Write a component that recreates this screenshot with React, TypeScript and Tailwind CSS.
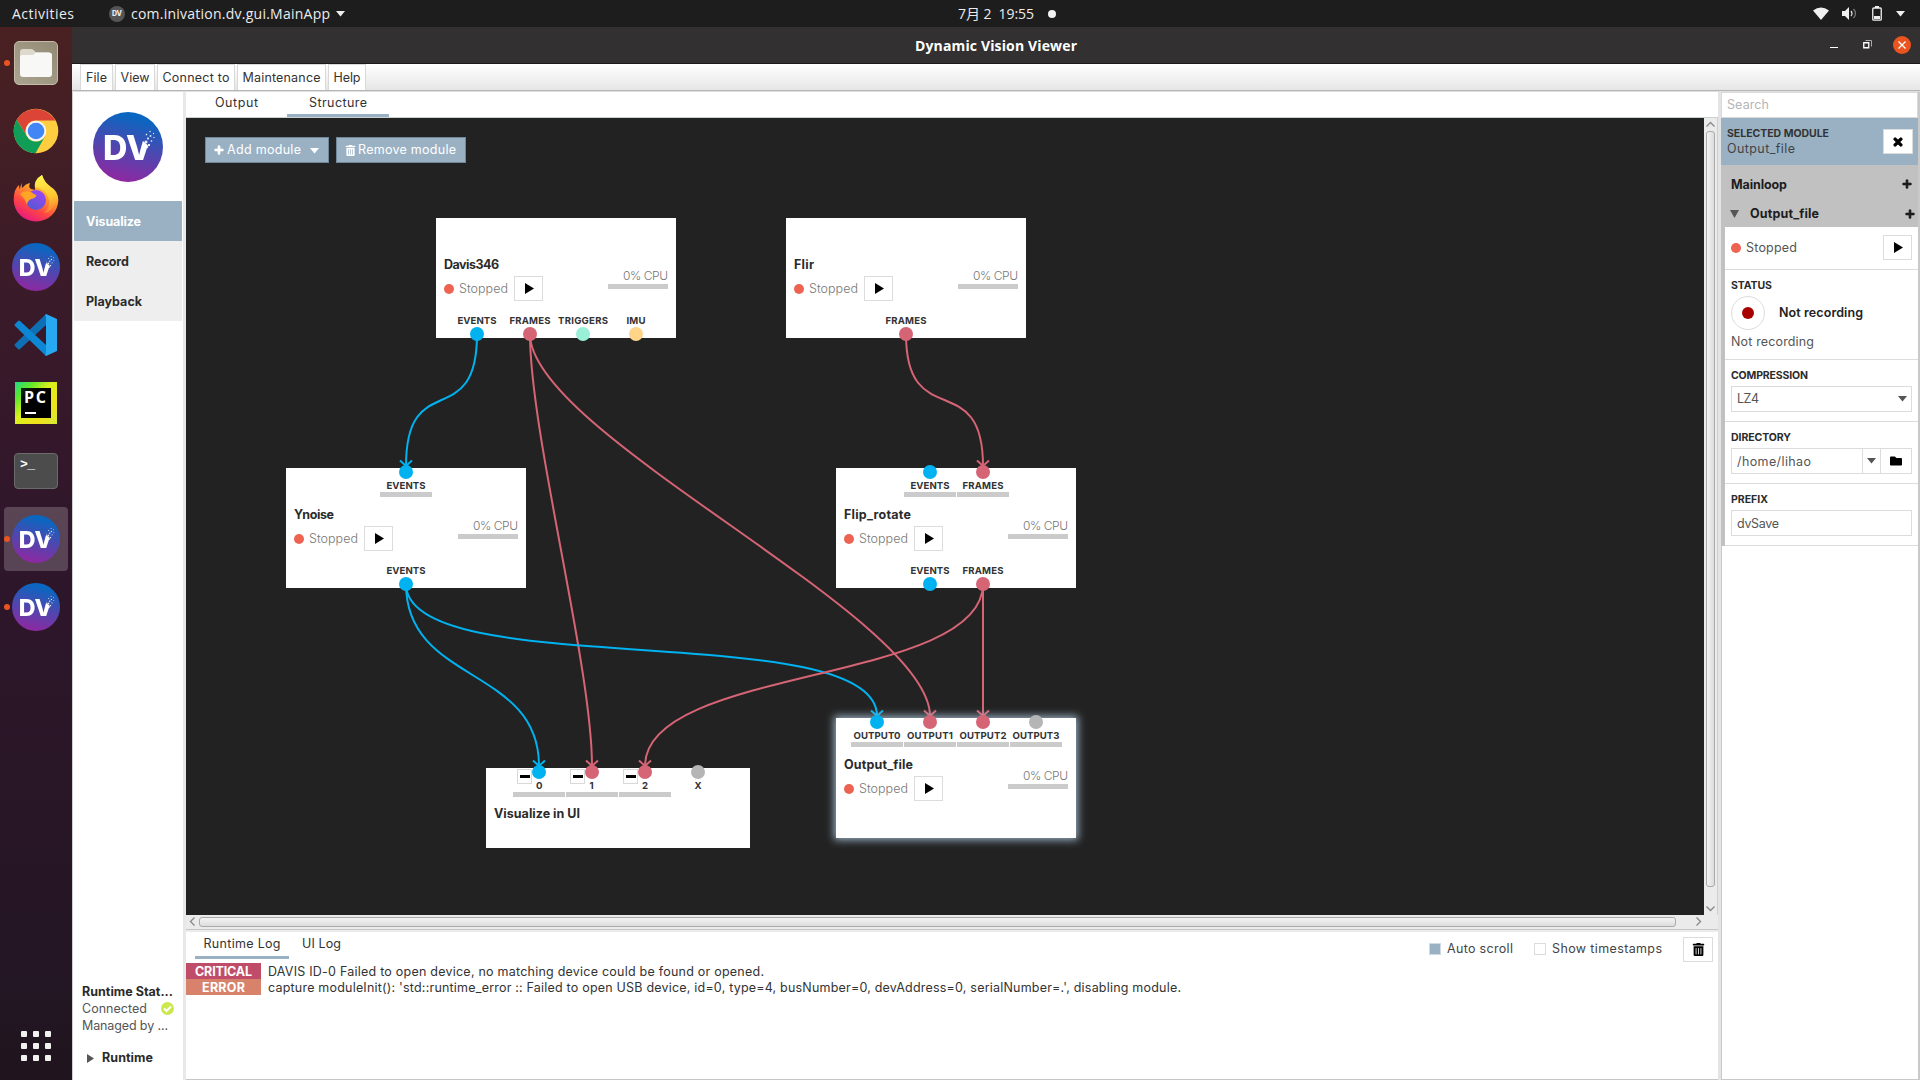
import { useLayoutEffect, useRef } from "react";
import type { ReactNode } from "react";
import { FaPlus, FaTimes, FaFolder, FaTrashAlt } from "react-icons/fa";

/* Single-line label whose tracking is adjusted to span a given width. */
function T({ w, children, className = "" }: { w: number; children: string; className?: string }) {
  const ref = useRef<HTMLSpanElement>(null);
  useLayoutEffect(() => {
    const el = ref.current;
    if (!el) return;
    el.style.letterSpacing = "0px";
    const range = document.createRange();
    range.selectNodeContents(el);
    const natural = range.getBoundingClientRect().width;
    el.style.letterSpacing = `${(w - natural) / Math.max(1, children.length - 1)}px`;
  }, [w, children]);
  return (
    <span ref={ref} className={`inline-block shrink-0 whitespace-pre ${className}`} style={{ width: w }}>
      {children}
    </span>
  );
}

function DVLogo({ size, id }: { size: number; id: string }) {
  const dots = [
    [53, 30, 2.6], [56, 33, 2], [50.5, 33.5, 2.2], [55, 26.5, 1.8], [58.5, 29, 1.4], [53.5, 22.5, 1.4],
    [57.5, 24, 1.6], [61, 25.5, 1.1], [57, 19.5, 1.2], [60.5, 21.5, 1.1], [54, 35, 2.2],
  ];
  return (
    <svg width={size} height={size} viewBox="0 0 70 70" className="block shrink-0">
      <defs>
        <linearGradient id={id} x1="0.6" y1="0" x2="0.35" y2="1">
          <stop offset="0.08" stopColor="#0a66c0" />
          <stop offset="0.5" stopColor="#4c48b0" />
          <stop offset="1" stopColor="#9226a0" />
        </linearGradient>
        <mask id={id + "m"}>
          <rect width="70" height="70" fill="#fff" />
          <path d="M50 29 L58 36 V18 H50 Z" fill="#000" />
        </mask>
      </defs>
      <circle cx="35" cy="35" r="35" fill={`url(#${id})`} />
      <text x="10" y="48.3" textLength="49" lengthAdjust="spacingAndGlyphs" fill="#fff" mask={`url(#${id}m)`}
        className="font-['Inter'] text-[34px] font-extrabold">DV</text>
      {dots.map(([x, y, s], i) => (
        <rect key={i} x={x - s / 2} y={y - s / 2} width={s} height={s} fill="#fff" opacity="0.9" />
      ))}
    </svg>
  );
}

function DockItem({ children, dot, active }: { children: ReactNode; dot?: boolean; active?: boolean }) {
  return (
    <div className="relative flex h-[68px] w-[72px] items-center justify-center">
      {active && <div className="absolute inset-x-1 inset-y-0.5 rounded bg-white/20" />}
      <div className="relative">{children}</div>
      {dot && <div className="absolute left-1 top-[31px] size-1.5 rounded-full bg-[#e95420]" />}
    </div>
  );
}

function FilesIcon() {
  return (
    <div className="flex h-[44px] w-[44px] items-center justify-center rounded-[5px] border border-[#c3bca8] bg-gradient-to-tr from-[#a9a390] to-[#938b74]">
      <svg width="34" height="30" viewBox="0 0 34 30">
        <path d="M1 4Q1 1 4 1H12Q14 1 15 2.5L17 4.5H30V12H1Z" fill="#ddd9cc" />
        <path d="M1 9Q1 7 3 7H14L17 4.500H30Q33 4.500 33 7V26Q33 29 30 29H4Q1 29 1 26Z" fill="#f8f8f7" />
      </svg>
    </div>
  );
}

function ChromeIcon() {
  return (
    <svg width="46" height="46" viewBox="-23 -23 46 46" className="block">
      <circle r="22.300" fill="#ffcd40" />
      <path d="M-19.300 -11.150A22.300 22.300 0 0 1 19.300 -10.500L0 -10.500A10.500 10.500 0 0 0 -9.100 5.250Z" fill="#db4437" />
      <path d="M-19.300 -11.150A22.300 22.300 0 0 0 -0.500 22.300L9.100 5.250A10.500 10.500 0 0 1 -9.100 5.250Z" fill="#0f9d58" />
      <circle r="10.300" fill="#f4f4f4" />
      <circle r="8.300" fill="#4285f4" />
    </svg>
  );
}

function FirefoxIcon() {
  return (
    <svg width="46" height="48" viewBox="0 0 46 48" className="-mt-0.5 block">
      <defs>
        <linearGradient id="ffa" x1="0.8" y1="0" x2="0.25" y2="1">
          <stop offset="0.1" stopColor="#fff44f" />
          <stop offset="0.4" stopColor="#ff9a2a" />
          <stop offset="0.7" stopColor="#ff4545" />
          <stop offset="1" stopColor="#e31587" />
        </linearGradient>
        <linearGradient id="ffb" x1="0.8" y1="0" x2="0.2" y2="1">
          <stop offset="0" stopColor="#a345f5" />
          <stop offset="1" stopColor="#4f5ad0" />
        </linearGradient>
        <linearGradient id="ffc" x1="0.5" y1="0" x2="0.6" y2="1">
          <stop offset="0" stopColor="#fff44f" />
          <stop offset="0.6" stopColor="#ffc22d" />
          <stop offset="1" stopColor="#ff7a38" />
        </linearGradient>
      </defs>
      <path d="M9 9Q8 12 9.500 14Q12 10 17 9Q15 13 18 15L22 16Q20 6 29 1Q31 8 38 13Q45 17 45.300 26A22.300 21.500 0 0 1 .7 26Q.7 15 6 11Q6 14 7 15Q7 12 9 9Z" fill="url(#ffa)" />
      <circle cx="23" cy="26" r="10" fill="url(#ffb)" />
      <path d="M22 13Q21 6 29 1Q31 8 37 13Q45 18 43 27Q39 39 31 39Q39 31 35 23Q32 15 22 13Z" fill="url(#ffc)" />
      <path d="M7 20Q11 16 18 18Q22 21 23.500 21Q23 24 18 25Q14 27 14 31Q13 26 7 20Z" fill="#ffa526" />
    </svg>
  );
}

function CodeIcon() {
  return (
    <svg width="44" height="44" viewBox="0 0 44 44" className="block">
      <path d="M32 1V12L6 36Q5 37 4 36L1 33Q0 32 1 31Z" fill="#0f6fb5" />
      <path d="M32 43V32L6 8Q5 7 4 8L1 11Q0 12 1 13Z" fill="#0d86d3" />
      <path d="M32 1L43 6V38L32 43Q31 43 32 39V5Q31 1 32 1Z" fill="#27a9f1" />
    </svg>
  );
}

function PyCharmIcon() {
  return (
    <div className="flex size-[42px] items-center justify-center bg-[linear-gradient(135deg,#21d789_0%,#5fe82a_22%,#d9f01d_45%,#f0e31b_75%,#d6e83a_100%)]">
      <div className="flex size-[30px] flex-col bg-gradient-to-br from-[#0c2a10] via-black to-black pl-[3px] pt-[1px]">
        <T w={22} className="font-['Open_Sans'] text-[16px] font-bold leading-[17px] text-white">PC</T>
        <div className="ml-px mt-[6px] h-[2px] w-[11px] bg-white" />
      </div>
    </div>
  );
}

function TerminalIcon() {
  return (
    <div className="h-[36px] w-[44px] rounded-[4px] border border-[#6b6b6b] bg-[#4c4c4c] pl-[5px] pt-px">
      <T w={15} className="font-['Liberation_Mono'] text-[13px] font-bold leading-[14px] text-white">{">_"}</T>
    </div>
  );
}

const Play = () => (
  <svg width="9" height="11" viewBox="0 0 9 11" className="ml-px block"><path d="M0 0L9 5.500L0 11Z" fill="#000" /></svg>
);
const Down = ({ fill = "#555" }: { fill?: string }) => (
  <svg width="9" height="6" viewBox="0 0 9 6" className="block"><path d="M0 0H9L4.500 5.500Z" fill={fill} /></svg>
);
const PlayButton = () => (
  <div className="flex h-[25px] w-[29px] items-center justify-center border border-[#dcdcdc] bg-white"><Play /></div>
);
const Plus = ({ className = "" }: { className?: string }) => (
  <FaPlus size={10} stroke="currentColor" strokeWidth={36} className={className} />
);

function TopBar() {
  return (
    <header className="relative flex h-[27px] items-center bg-[#1d1d1d] font-['Open_Sans','Noto_Sans_CJK_JP',sans-serif] text-[14px] leading-[26px] text-[#ececec]">
      <T w={62} className="ml-3">Activities</T>
      <div className="ml-[35px] flex size-4 items-center justify-center rounded-full bg-[#555]">
        <T w={10} className="font-['Inter'] text-[7px] font-extrabold leading-4">DV</T>
      </div>
      <T w={199} className="ml-[6px]">com.inivation.dv.gui.MainApp</T>
      <div className="ml-[6px]"><Down fill="#ececec" /></div>
      <div className="absolute left-[958px] flex items-center pt-px">
        <T w={76}>7月 2  19:55</T>
        <div className="mb-px ml-[14px] size-2 rounded-full bg-[#f2f2f2]" />
      </div>
      <div className="ml-auto mr-[15px] flex items-center">
        <svg width="16" height="13" viewBox="0 0 16 13"><path d="M0 3.500Q8 -2.500 16 3.500L8 13Z" fill="#f0f0f0" /></svg>
        <svg width="15" height="13" viewBox="0 0 15 13" className="ml-[13px]">
          <path d="M0 4H3L7 0V13L3 9H0Z" fill="#f0f0f0" />
          <path d="M9 4Q11 6.500 9 9" stroke="#ddd" fill="none" strokeWidth="1.300" />
          <path d="M11.500 2Q15.500 6.500 11.500 11" stroke="#777" fill="none" strokeWidth="1.300" />
        </svg>
        <svg width="10" height="15" viewBox="0 0 10 15" className="ml-[15px]">
          <rect x="0.750" y="2" width="8.500" height="12.200" rx="1" fill="none" stroke="#f0f0f0" strokeWidth="1.300" />
          <path d="M3 0H7V2H3ZM2 10H8V13H2Z" fill="#f0f0f0" />
        </svg>
        <div className="ml-[14px]"><Down fill="#f0f0f0" /></div>
      </div>
    </header>
  );
}

function Dock() {
  return (
    <aside className="flex w-[72px] shrink-0 flex-col bg-[linear-gradient(#4a2122_0%,#391a29_27%,#2f162b_50%,#231623_93%,#1f141d_100%)] pt-0.5">
      <DockItem dot><FilesIcon /></DockItem>
      <DockItem><ChromeIcon /></DockItem>
      <DockItem><FirefoxIcon /></DockItem>
      <DockItem><DVLogo size={48} id="dv1" /></DockItem>
      <DockItem><CodeIcon /></DockItem>
      <DockItem><PyCharmIcon /></DockItem>
      <DockItem><TerminalIcon /></DockItem>
      <DockItem dot active><DVLogo size={48} id="dv2" /></DockItem>
      <DockItem dot><DVLogo size={48} id="dv3" /></DockItem>
      <div className="mb-[19px] ml-[21px] mt-auto grid w-[30px] grid-cols-3 gap-1.5">
        {Array.from({ length: 9 }, (_, i) => <div key={i} className="size-1.5 rounded-[1px] bg-[#f2f2f0]" />)}
      </div>
    </aside>
  );
}

function TitleBar() {
  return (
    <div className="relative flex h-[37px] items-center justify-end border-b border-[#1c1a1b] bg-[#323031] pb-px">
      <div className="absolute inset-0 flex items-center justify-center">
        <T w={162} className="font-['Open_Sans'] text-[14px] font-bold text-white">Dynamic Vision Viewer</T>
      </div>
      <div className="mt-[5px] h-px w-2 bg-white" />
      <svg width="9" height="9" viewBox="0 0 9 9" className="ml-[25px]">
        <path d="M.75 2.750H5.750V7.750H.75Z" fill="none" stroke="#fff" strokeWidth="1.300" />
        <path d="M2.500 .5H8.500V6.500" fill="none" stroke="#aaa" />
      </svg>
      <div className="ml-[21px] mr-[9px] flex size-[18px] items-center justify-center rounded-full bg-[#e95420]">
        <svg width="8" height="8" viewBox="0 0 8 8"><path d="M.5 .5L7.500 7.500M7.500 .5L.5 7.500" stroke="#fff" strokeWidth="1.300" /></svg>
      </div>
    </div>
  );
}

const menus: [string, number, string][] = [
  ["File", 21, "w-[33px]"], ["View", 29, "w-[40px]"], ["Connect to", 67, "w-[78px]"], ["Maintenance", 78, "w-[89px]"], ["Help", 27, "w-[38px]"],
];

function MenuBar() {
  return (
    <div className="flex h-[27px] gap-[2px] border-b border-[#b5b5b5] bg-gradient-to-b from-white to-[#e6e6e6] pl-2">
      {menus.map(([t, w, cls]) => (
        <div key={t} className={`flex justify-center border border-b-0 border-[#d9d9d9] bg-white leading-[25px] ${cls}`}>
          <T w={w}>{t}</T>
        </div>
      ))}
    </div>
  );
}

function LeftNav() {
  return (
    <nav className="flex w-[114px] shrink-0 flex-col border-l border-r-[3px] border-l-[#cfcfcf] border-r-[#e8e8e8] bg-white text-[#2b2b2b]">
      <div className="flex h-[109px] justify-center pt-5"><DVLogo size={70} id="dvmain" /></div>
      <div className="mx-px flex flex-col bg-[#eeeeee] font-bold leading-[42px]">
        <div className="h-10 bg-[#9ab1c4] pl-3 text-white"><T w={55}>Visualize</T></div>
        <div className="h-10 pl-3"><T w={43}>Record</T></div>
        <div className="h-10 pl-3"><T w={56}>Playback</T></div>
      </div>
      <div className="mt-auto flex flex-col pl-[9px] leading-[17px]">
        <T w={91} className="font-bold">Runtime Stat...</T>
        <div className="flex items-center text-[#555]">
          <T w={65}>Connected</T>
          <svg width="13" height="13" viewBox="0 0 13 13" className="ml-[14px]">
            <circle cx="6.500" cy="6.500" r="6.500" fill="#cbe84c" />
            <path d="M3 6.500L5.500 9L10 4.500" fill="none" stroke="#fff" strokeWidth="2" />
          </svg>
        </div>
        <T w={86} className="text-[#555]">Managed by ...</T>
        <div className="mb-[14px] mt-[15px] flex items-center font-bold">
          <svg width="7" height="9" viewBox="0 0 7 9" className="ml-[5px] mr-2 mt-px"><path d="M0 0L7 4.500L0 9Z" fill="#555" /></svg>
          <T w={51}>Runtime</T>
        </div>
      </div>
    </nav>
  );
}

type Port = { x: number; label: string; w: number; c: string };
const BLUE = "#00b2f0", RED = "#d56475", GREY = "#b5b5b5";
type NodeT = { name: string; nw: number; x: number; y: number; ins?: Port[]; outs?: Port[]; selected?: boolean; sink?: boolean };

const nodes: NodeT[] = [
  { name: "Davis346", nw: 55, x: 250, y: 100, outs: [
    { x: 41, label: "EVENTS", w: 39, c: BLUE }, { x: 94, label: "FRAMES", w: 41, c: RED },
    { x: 147, label: "TRIGGERS", w: 50, c: "#9af0d7" }, { x: 200, label: "IMU", w: 19, c: "#ffd488" }] },
  { name: "Flir", nw: 20, x: 600, y: 100, outs: [{ x: 120, label: "FRAMES", w: 41, c: RED }] },
  { name: "Ynoise", nw: 40, x: 100, y: 350, ins: [{ x: 120, label: "EVENTS", w: 39, c: BLUE }], outs: [{ x: 120, label: "EVENTS", w: 39, c: BLUE }] },
  { name: "Flip_rotate", nw: 67, x: 650, y: 350,
    ins: [{ x: 94, label: "EVENTS", w: 39, c: BLUE }, { x: 147, label: "FRAMES", w: 41, c: RED }],
    outs: [{ x: 94, label: "EVENTS", w: 39, c: BLUE }, { x: 147, label: "FRAMES", w: 41, c: RED }] },
  { name: "Output_file", nw: 69, x: 650, y: 600, selected: true, ins: [
    { x: 41, label: "OUTPUT0", w: 47, c: BLUE }, { x: 94, label: "OUTPUT1", w: 46, c: RED },
    { x: 147, label: "OUTPUT2", w: 47, c: RED }, { x: 200, label: "OUTPUT3", w: 47, c: GREY }] },
  { name: "Visualize in UI", nw: 86, x: 300, y: 650, sink: true, ins: [
    { x: 53, label: "0", w: 6, c: BLUE }, { x: 106, label: "1", w: 5, c: RED },
    { x: 159, label: "2", w: 6, c: RED }, { x: 212, label: "X", w: 7, c: GREY }] },
];

const links: [number, number, number, number, string][] = [
  [291, 216, 220, 348, BLUE], [344, 216, 406, 648, RED], [344, 216, 744, 598, RED], [720, 216, 797, 348, RED],
  [220, 466, 353, 648, BLUE], [220, 466, 691, 598, BLUE], [797, 466, 459, 648, RED], [797, 466, 797, 598, RED],
];

function PortDot({ p, top }: { p: Port; top: boolean }) {
  return (
    <div className={`absolute size-[14px] rounded-full ${top ? "-top-[3px]" : "-bottom-[3px]"}`} style={{ left: p.x - 7, backgroundColor: p.c }} />
  );
}

function Node({ n }: { n: NodeT }) {
  return (
    <div
      className={`absolute bg-white ${n.sink ? "h-[80px] w-[264px]" : "h-[120px] w-[240px]"} ${n.selected ? "shadow-[0_0_8px_2px_#9ab1c4]" : ""}`}
      style={{ left: n.x, top: n.y }}
    >
      {n.ins?.map((p, i) => (
        <div key={i}>
          {n.sink && i < 3 && (
            <div className="absolute top-px flex h-[15px] w-[15px] items-center justify-center border border-[#d9d9d9]" style={{ left: p.x - 22 }}>
              <div className="h-[3px] w-2.5 bg-black" />
            </div>
          )}
          <PortDot p={p} top />
          <div className="absolute top-[11px] flex w-[52px] flex-col items-center text-[9.6px] font-bold leading-[13px] text-[#333]" style={{ left: p.x - 26 }}>
            <T w={p.w}>{p.label}</T>
            {!(n.sink && i === 3) && <div className="h-[5px] w-full bg-[#cbcbcb]" />}
          </div>
        </div>
      ))}
      {n.outs?.map((p, i) => (
        <div key={i}>
          <div className="absolute top-[96px] flex w-[52px] justify-center text-[9.6px] font-bold leading-[13px] text-[#333]" style={{ left: p.x - 26 }}>
            <T w={p.w}>{p.label}</T>
          </div>
          <PortDot p={p} top={false} />
        </div>
      ))}
      <div className={`flex flex-col px-2 leading-[17px] ${n.sink ? "pt-[37px]" : "pt-[38px]"}`}>
        <T w={n.nw} className="font-bold text-[#2b2b2b]">{n.name}</T>
        {!n.sink && (
          <div className="mt-[3px] flex items-center">
            <div className="size-[10px] rounded-full bg-[#ed6251]" />
            <T w={49} className="ml-[5px] font-light text-[#777]">Stopped</T>
            <div className="ml-[6px]"><PlayButton /></div>
            <div className="-mt-[21px] ml-auto flex w-[60px] flex-col items-end">
              <T w={45} className="text-[12px] font-light text-[#777]">0% CPU</T>
              <div className="h-[5px] w-full bg-[#cbcbcb]" />
            </div>
          </div>
        )}
      </div>
    </div>
  );
}

function Canvas() {
  return (
    <div className="relative h-[797px] min-w-0 flex-1 overflow-hidden bg-[#222222]">
      <svg width="1518" height="797" className="absolute left-0 top-0" fill="none" strokeWidth="2">
        {links.map(([x1, y1, x2, y2, c], i) => (
          <g key={i} stroke={c}>
            <path d={`M${x1} ${y1}C${x1} ${y1 + 100} ${x2} ${y2 - 100} ${x2} ${y2}`} />
            <path d={`M${x2 - 6} ${y2 - 5.500}L${x2} ${y2}L${x2 + 6} ${y2 - 5.500}`} />
          </g>
        ))}
      </svg>
      {nodes.map((n) => <Node key={n.name} n={n} />)}
      <div className="relative flex gap-[7px] pl-[19px] pt-[19px] leading-[24px] text-white">
        <div className="flex h-[26px] w-[124px] items-center border border-[#6f889b] bg-[#9ab1c4] pl-2">
          <Plus /><T w={74} className="ml-[3px]">Add module</T><div className="ml-[9px] mt-px"><Down fill="#fff" /></div>
        </div>
        <div className="flex h-[26px] w-[130px] items-center border border-[#6f889b] bg-[#9ab1c4] pl-2">
          <FaTrashAlt size={11} /><T w={98} className="ml-[2px]">Remove module</T>
        </div>
      </div>
    </div>
  );
}

const Chevron = ({ d }: { d: string }) => (
  <svg width="9" height="9" viewBox="0 0 9 9" className="block shrink-0"><path d={d} fill="none" stroke="#888" strokeWidth="1.300" /></svg>
);

function Center() {
  return (
    <main className="flex w-[1532px] shrink-0 flex-col bg-white">
      <div className="flex h-[26px] border-b border-[#c9d2cf] leading-[21px]">
        <T w={43} className="ml-[29px]">Output</T>
        <div className="ml-[29px] flex h-[25px] w-[102px] justify-center border-b-[3px] border-[#9ab1c4]"><T w={58}>Structure</T></div>
      </div>
      <div className="flex h-[797px]">
        <Canvas />
        <div className="flex w-[14px] flex-col items-center border-r border-[#cfcfcf] bg-[#ebebeb] pb-[2px] pt-[2px]">
          <Chevron d="M.5 6.500L4.500 2.500L8.500 6.500" />
          <div className="mb-auto mt-[2px] h-[756px] w-[9px] rounded-[3px] border border-[#aaa] bg-gradient-to-r from-[#f4f4f4] to-[#dcdcdc]" />
          <Chevron d="M.5 2.500L4.500 6.500L8.500 2.500" />
        </div>
      </div>
      <div className="flex h-[15px] items-center border-b border-[#c6c6c6] bg-[#ebebeb] pb-px pl-[2px]">
        <Chevron d="M6.500 .5L2.500 4.500L6.500 8.500" />
        <div className="ml-[2px] h-[10px] w-[1477px] rounded-[3px] border border-[#aaa] bg-gradient-to-b from-[#f4f4f4] to-[#dcdcdc]" />
        <div className="ml-[18px]"><Chevron d="M2.500 .5L6.500 4.500L2.500 8.500" /></div>
      </div>
      <div className="flex h-[33px] border-t-2 border-[#ebebeb] leading-[24px]">
        <div className="ml-[9px] flex h-[27px] w-[94px] justify-center border-b-[3px] border-[#9ab1c4]"><T w={77}>Runtime Log</T></div>
        <T w={39} className="ml-[13px]">UI Log</T>
        <div className="ml-auto mr-[5px] flex h-[34px] items-center text-[#444]">
          <div className="size-3 border border-[#d0dae2] bg-[#9ab1c4]" />
          <T w={66} className="ml-[6px]">Auto scroll</T>
          <div className="ml-[21px] size-3 border border-[#dcdcdc]" />
          <T w={110} className="ml-[6px]">Show timestamps</T>
          <div className="ml-[21px] flex h-[25px] w-[30px] items-center justify-center border border-[#dcdcdc] text-black"><FaTrashAlt size={13} /></div>
        </div>
      </div>
      <div className="flex flex-1 flex-col border-b border-[#c6c6c6] leading-[17px]">
        <div className="flex h-4">
          <div className="h-4 w-[75px] bg-[#bf4d69] pl-[9px] font-bold text-white"><T w={57}>CRITICAL</T></div>
          <T w={496} className="ml-[7px]">DAVIS ID-0 Failed to open device, no matching device could be found or opened.</T>
        </div>
        <div className="flex h-4">
          <div className="h-4 w-[75px] bg-[#d8826b] pl-4 font-bold text-white"><T w={43}>ERROR</T></div>
          <T w={913} className="ml-[7px]">capture moduleInit(): 'std::runtime_error :: Failed to open USB device, id=0, type=4, busNumber=0, devAddress=0, serialNumber=.', disabling module.</T>
        </div>
      </div>
    </main>
  );
}

function Caption({ w, children }: { w: number; children: string }) {
  return <T w={w} className="block h-[15px] text-[10.500px] font-bold leading-[16px] text-[#2b2b2b]">{children}</T>;
}

function RightPanel() {
  return (
    <aside className="flex min-w-0 flex-1 flex-col border-l-[3px] border-r-2 border-l-[#e4e4e4] border-r-[#c9c9c9] bg-white text-[#555]">
      <div className="h-[26px] border border-[#d9d9d9] pl-[5px] leading-[24px] text-[#b5b5b5]"><T w={42}>Search</T></div>
      <div className="flex h-[47px] items-center justify-between bg-[#9ab1c4] pl-[6px] pr-[5px]">
        <div className="flex flex-col text-[#444]">
          <T w={102} className="text-[10.500px] font-bold leading-[14px] text-[#333]">SELECTED MODULE</T>
          <T w={68} className="leading-[15px]">Output_file</T>
        </div>
        <div className="flex h-[25px] w-[30px] items-center justify-center border border-[#dcdcdc] bg-white text-black">
          <FaTimes size={12} stroke="currentColor" strokeWidth={44} />
        </div>
      </div>
      <div className="flex h-[62px] flex-col bg-[#c1c1c1] pt-[4px] font-bold leading-[30px] text-[#1d1d1d]">
        <div className="flex h-[30px] items-center pl-[10px] pr-[6px]"><T w={56} className="pt-px">Mainloop</T><Plus className="ml-auto" /></div>
        <div className="flex h-[29px] items-center pl-[9px] pr-[3px]">
          <svg width="9" height="8" viewBox="0 0 9 8"><path d="M0 0H9L4.500 8Z" fill="#555" /></svg>
          <T w={69} className="ml-[11px] pt-px">Output_file</T><Plus className="ml-auto" />
        </div>
      </div>
      <div className="border-l-4 border-[#c1c1c1]">
        <div className="flex h-[43px] items-center border-b border-[#dcdcdc] pl-[6px] pr-[6px] pb-px">
          <div className="size-[10px] rounded-full bg-[#ed6251]" />
          <T w={51} className="ml-[5px] pt-px">Stopped</T>
          <div className="ml-auto"><PlayButton /></div>
        </div>
        <div className="flex h-[90px] flex-col border-b border-[#dcdcdc] pl-[6px] pt-[8px]">
          <Caption w={41}>STATUS</Caption>
          <div className="mt-[3px] flex items-center">
            <div className="flex size-[34px] items-center justify-center rounded-full border border-[#dcdcdc]"><div className="size-3 rounded-full bg-[#a80000]" /></div>
            <T w={84} className="ml-[14px] font-semibold text-[#222]">Not recording</T>
          </div>
          <T w={83} className="mt-[3px] leading-[18px]">Not recording</T>
        </div>
        <div className="flex h-[62px] flex-col border-b border-[#dcdcdc] pl-[6px] pr-[6px] pt-[8px]">
          <Caption w={77}>COMPRESSION</Caption>
          <div className="mt-[3px] flex h-[26px] items-center justify-between border border-[#dcdcdc] pl-[5px] pr-1"><T w={22} className="pt-px">LZ4</T><Down /></div>
        </div>
        <div className="flex h-[62px] flex-col border-b border-[#dcdcdc] pl-[6px] pr-[6px] pt-[8px]">
          <Caption w={60}>DIRECTORY</Caption>
          <div className="mt-[3px] flex h-[26px] items-stretch border border-[#dcdcdc] pl-[5px]">
            <T w={74} className="leading-[25px]">/home/lihao</T>
            <div className="ml-auto flex w-[19px] items-center justify-center border-x border-[#dcdcdc]"><Down /></div>
            <div className="flex w-[30px] items-center justify-center text-black"><FaFolder size={12} /></div>
          </div>
        </div>
        <div className="flex h-[62px] flex-col border-b border-[#dcdcdc] pl-[6px] pr-[6px] pt-[8px]">
          <Caption w={37}>PREFIX</Caption>
          <div className="mt-[3px] h-[26px] border border-[#dcdcdc] pl-[5px] leading-[25px]"><T w={42}>dvSave</T></div>
        </div>
      </div>
      <div className="flex-1 border-b border-l border-[#c9c9c9]" />
    </aside>
  );
}

export default function App() {
  return (
    <div className="flex h-[1080px] w-[1920px] flex-col overflow-hidden bg-white font-['Inter','Liberation_Sans',sans-serif] text-[12.500px] text-[#333]">
      <TopBar />
      <div className="flex min-h-0 flex-1">
        <Dock />
        <div className="flex min-w-0 flex-1 flex-col">
          <TitleBar />
          <MenuBar />
          <div className="h-px bg-[#e0e0e0]" />
          <div className="flex min-h-0 flex-1">
            <LeftNav />
            <Center />
            <RightPanel />
          </div>
        </div>
      </div>
    </div>
  );
}
